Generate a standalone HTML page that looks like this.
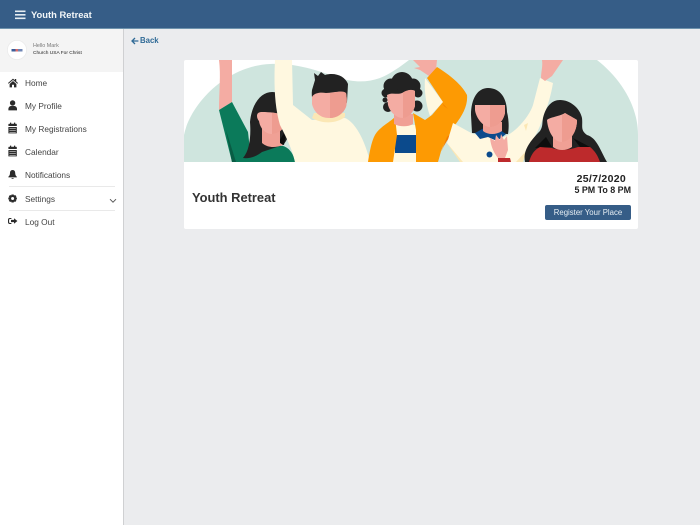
<!DOCTYPE html>
<html><head><meta charset="utf-8">
<style>
*{box-sizing:border-box}
html,body{margin:0;padding:0;width:700px;height:525px;overflow:hidden;background:#ebecee;font-family:"Liberation Sans",sans-serif}
.abs{position:absolute;white-space:nowrap}
#hdr{left:0;top:0;width:700px;height:29px;background:#365d87;border-bottom:1px solid #6f93ad}
#side{left:0;top:29px;width:124px;height:496px;background:#fff;border-right:1px solid #cfd0d2}
#prof{left:0;top:29px;width:123px;height:43px;background:#f4f4f4}
.it{left:25px;font-size:8.3px;color:#444;line-height:12px}
.hr{left:9px;width:106px;height:1px;background:#e9e9e9}
#card{left:184px;top:60px;width:454px;height:169px;background:#fff;border-radius:2px}
</style></head><body>
<div class="abs" id="hdr"></div>
<svg class="abs" style="left:15px;top:10px" width="11" height="10"><g fill="#e6edf2"><rect x="0" y="0.5" width="10.5" height="1.6"/><rect x="0" y="4" width="10.5" height="1.6"/><rect x="0" y="7.5" width="10.5" height="1.6"/></g></svg>
<div class="abs" style="left:31px;top:8px;font-size:9.4px;font-weight:bold;color:#f2f6f8;line-height:13px;width:70px">Youth Retreat</div>

<div class="abs" id="side"></div>
<div class="abs" id="prof"></div>
<svg class="abs" style="left:7px;top:40px" width="20" height="20"><circle cx="10" cy="10" r="9.6" fill="#fff" stroke="#ebebeb" stroke-width=".8"/><rect x="4.5" y="9" width="4" height="2.5" fill="#3c5f9a"/><rect x="8.5" y="9" width="2.5" height="2.5" fill="#d86a6a"/><rect x="11" y="9" width="4.5" height="2.5" fill="#6f86b5"/></svg>
<div class="abs" style="left:33px;top:42.5px;font-size:5.4px;color:#777;line-height:7px">Hello Mark</div>
<div class="abs" style="left:33px;top:49.5px;font-size:4.8px;color:#222;line-height:7px">Church USA For Christ</div>

<svg class="abs" style="left:8px;top:77px" width="10" height="160" viewBox="0 0 10 160" fill="#2b2b2b">
<path d="M0 6 L5 1.6 L6.8 3.2 V2 H8.2 V4.4 L10 6 L9.4 6.8 L5 3 L.6 6.8Z M1.6 7 L5 4 L8.4 7 V10.4 H6 V7.8 H4 V10.4 H1.6Z"/>
<circle cx="4.6" cy="26" r="2.7"/><path d="M.4 33.400 V32 C.4 30 2 29 3 29 H6.2 C7.4 29 9 30 9 32 V33.400Z"/>
<path d="M.4 50 H8.8 V56.400 H.4Z M.4 49 V47.4 C.4 47 .8 46.7 1.2 46.7 H2 V45.6 H3.2 V46.7 H6 V45.6 H7.2 V46.7 H8 C8.4 46.7 8.8 47 8.8 47.4 V49Z"/>
<g fill="#fff"><rect x="1.4" y="51" width="6.4" height=".5"/><rect x="1.4" y="53" width="6.4" height=".5"/><rect x="1.4" y="55" width="6.4" height=".5"/></g>
<path d="M.4 73 H8.8 V79.400 H.4Z M.4 72 V70.4 C.4 70 .8 69.7 1.2 69.7 H2 V68.6 H3.2 V69.7 H6 V68.6 H7.2 V69.7 H8 C8.4 69.7 8.8 70 8.8 70.4 V72Z"/>
<g fill="#fff"><rect x="1.4" y="74" width="6.4" height=".5"/><rect x="1.4" y="76" width="6.4" height=".5"/><rect x="1.4" y="78" width="6.4" height=".5"/></g>
<path d="M4.6 93 C6.6 93 7.2 94.6 7.2 96 C7.2 98 8 99 8.8 99.6 V100.400 H.4 V99.6 C1.2 99 2 98 2 96 C2 94.6 2.6 93 4.6 93Z M3.4 101 H5.8 C5.8 102 3.4 102 3.4 101Z"/>
<path fill-rule="evenodd" d="M3.5 117.500 H5.700 L6 118.500 L7.100 118 L8.400 119.300 L7.800 120.300 L8.900 120.600 V122.400 L7.800 122.700 L8.400 123.700 L7.100 125 L6 124.500 L5.700 125.500 H3.500 L3.200 124.500 L2.100 125 L.8 123.700 L1.400 122.700 L.3 122.400 V120.600 L1.400 120.300 L.8 119.300 L2.100 118 L3.200 118.500Z M4.600 120 A1.500 1.500 0 1 0 4.600 123 A1.500 1.500 0 1 0 4.600 120Z"/>
<path d="M3.400 142 H2 C1.400 142 1.100 142.400 1.100 143 V145 C1.100 145.600 1.400 146 2 146 H3.400 V147 H1.800 C.6 147 0 146.200 0 145.200 V142.800 C0 141.800 .6 141 1.800 141 H3.400Z M6 141.200 L9.400 144 L6 146.800 V145.100 H3 V142.900 H6Z"/>
</svg>
<div class="abs it" style="top:77px">Home</div>
<div class="abs it" style="top:100px">My Profile</div>
<div class="abs it" style="top:123px">My Registrations</div>
<div class="abs it" style="top:146px">Calendar</div>
<div class="abs it" style="top:169px">Notifications</div>
<div class="abs hr" style="top:186px"></div>
<div class="abs it" style="top:193px">Settings</div>
<svg class="abs" style="left:109px;top:198px" width="8" height="6"><path d="M1 1.200 L4 4.200 L7 1.200" fill="none" stroke="#555" stroke-width="1"/></svg>
<div class="abs hr" style="top:210px"></div>
<div class="abs it" style="top:216px">Log Out</div>

<svg class="abs" style="left:131px;top:37px" width="8" height="8"><path d="M7.400 4 H1.400 M4 1 L1 4 L4 7" fill="none" stroke="#2f6a96" stroke-width="1.300"/></svg>
<div class="abs" style="left:140px;top:35px;font-size:7.800px;font-weight:bold;color:#2f6a96;line-height:12px">Back</div>

<div class="abs" id="card"></div>
<svg class="abs" style="left:0;top:0" width="700" height="163" viewBox="0 0 700 163">
<defs><clipPath id="c"><rect x="184" y="60" width="454" height="102"/></clipPath></defs>
<g clip-path="url(#c)">
<path fill="#cfe5de" d="M184 162 V135 C190 105 225 66 270 64 C300 63 320 72 340 78 C352 82 366 83 380 78 C390 74 400 67 409 60 H597 C620 78 638 105 638 135 V162Z"/>
<!-- person 1 -->
<path fill="#f4aca3" d="M219 60 H232 L232 102 L219 110 C219 92 221 75 219 60Z"/>
<path fill="#0b7a5a" d="M219 110 L232 102 L248 132 L250 150 L265 146 L283 146 C290 148 294 155 295 162 H232Z"/>
<path fill="#095c44" d="M226 130 L236 162 H232Z"/>
<path fill="#222" d="M243 158 C250 150 251 135 250 122 C252 102 262 92 272 92 C284 92 290 104 290 122 C290 132 288 140 283 145 L262 152 C256 157 248 159 243 158Z"/>
<path fill="#0d0d0d" d="M278 143 L287 128 L284 145Z"/>
<path fill="#f0a095" d="M262 128 H280 V143 L283 145 C275 148 268 148 262 143Z"/>
<path fill="#f4aca3" d="M257 116 C257 113 259 112 262 112 C270 112 278 113 283 115 C286 116 287 118 287 120 C285 128 279 134 272 134 C265 134 260 128 259 121 C258 120 257 118 257 116Z"/>
<path fill="#ee9c90" d="M272 112.500 C276 113 280 114 283 115 C286 116 287 118 287 120 C285 128 279 134 272 134Z"/>
<!-- person 2 -->
<path fill="#fff8e0" d="M275 60 H292 L293 105 L312 120 L345 118 C355 122 365 140 370 162 H295 C292 148 285 135 280 125 C274 105 274 80 275 60Z"/>
<path fill="#fbe7b5" d="M312 118 C322 124 336 124 345 117 L345 113 H314Z"/>
<path fill="#222" d="M312 90 L315 80 L314 73 L318 76 L321 72 L325 75 C335 72 345 76 348 84 L347 102 L343 112 L318 114 C313 105 311 97 312 90Z"/>
<path fill="#f4aca3" d="M312 97 C314 93 320 92 326 93 C333 93 342 90 346 93 C347 98 347 103 346 107 C343 114 337 118 329 118 C320 118 314 112 312 104Z"/>
<path fill="#ee9c90" d="M330 93 C335 93 342 90 346 93 C347 98 347 103 346 107 C343 114 337 118 330 118Z"/>
<!-- person 3 -->
<path fill="#fff8e0" d="M425 78 L443 102 L430 116 C426 105 424 90 425 78Z"/>
<path fill="#f4aca3" d="M413 60 H437 L436 70 L429 76 L420 70 L414 68 L420 67Z"/>
<path fill="#fff8e0" d="M393 125 H416 V162 H393Z"/>
<path fill="#0b4a8c" d="M395 135 H416 V153 H395Z"/>
<path fill="#fd9a03" d="M368 162 C370 150 372 138 377 132 C383 125 390 122 395 117 L397 135 L393 162Z"/>
<path fill="#fd9a03" d="M413 113 L425 120 L432 115 L443 102 L427 78 L437 67 C450 75 462 85 467 95 C468 105 463 115 455 125 C450 135 442 145 440 155 L438 162 H416 L416 130Z"/>
<path fill="#f27a02" d="M441 152 C444 145 448 139 453 132 L447 137 Z M442 103 L448 109 L444 106Z"/>
<g fill="#222"><circle cx="402" cy="83" r="11"/><circle cx="391" cy="86" r="7.500"/><circle cx="413" cy="86" r="7.500"/><circle cx="386" cy="93" r="4.500"/><circle cx="418" cy="93" r="4.500"/><circle cx="388" cy="107" r="5"/><circle cx="417" cy="106" r="5.500"/><circle cx="385" cy="100" r="2.500"/><rect x="388" y="90" width="27" height="18"/></g>
<path fill="#f0a095" d="M394 114 H413 V124 C408 127 400 127 394 124Z"/>
<path fill="#f4aca3" d="M387 95 C392 92 397 95 402 93 C407 90 412 89 415 91 V106 C413 113 408 118 403 118 C396 118 390 112 388 105Z"/>
<path fill="#ee9c90" d="M403 92.500 C407 90 412 89 415 91 V106 C413 113 408 118 403 118Z"/>
<!-- person 4 -->
<path fill="#fbe7b5" d="M447 143 L452 145 L464 162 H460Z"/>
<path fill="#fff8e0" d="M540 78 L553 83 C551 95 548 105 545 112 C540 130 530 145 525 152 L523 162 H463 L447 143 L453 123 L473 134 L500 138 C515 135 530 115 533 105Z"/>
<path fill="#fbe7b5" d="M528 123 L526 131 L524 125Z M527 150 L523 162 H516Z"/>
<path fill="#f4aca3" d="M542 60 H563 L552 76 L545 81 L541 78 C541 72 543 66 542 60Z"/>
<path fill="#222" d="M471 115 C471 98 478 88 488 88 C500 88 507 98 507 112 C509 120 509 128 508 134 L472 133Z"/>
<path fill="#0b4a8c" d="M475 133 L484 128 L500 130 L506 134 L497 141 L488 137 L480 139Z"/>
<path fill="#f0a095" d="M483 122 H502 V131 C496 135 488 135 483 131Z"/>
<path fill="#f4aca3" d="M475 105 L505 105 V113 C503 122 497 127 490 127 C483 127 476 118 475 110Z"/>
<path fill="#ee9c90" d="M490 105 H505 V113 C503 122 497 127 490 127Z"/>
<rect x="484" y="100" width="1.500" height="5" fill="#222"/><rect x="496" y="100" width="1.500" height="5" fill="#222"/>
<circle cx="489.500" cy="154.500" r="3" fill="#0b4a8c"/>
<path fill="#bd2a2c" d="M498 158 H510 L511 162 H498Z"/>
<path fill="#f4aca3" d="M490 138 L495 141 L496 135 L500 140 L501 134 L504 140 L507 136 L508 150 L505 158 L498 158 C494 153 491 147 490 138Z"/>
<!-- person 5 -->
<path fill="#222" d="M525 162 C523 152 528 143 540 131 C543 126 542 124 543 118 C546 106 552 100 560 100 C570 100 580 108 582 118 C583 126 580 130 587 135 C597 138 600 150 607 162Z"/>
<path fill="#0d0d0d" d="M535 148 L546 137 L552 147 Z M573 138 L590 147 L580 147Z"/>
<path fill="#bd2a2c" d="M529 162 C531 155 534 150 540 147 L552 148 C560 151 570 150 578 147 L590 147 C595 151 598 156 600 162Z"/>
<path fill="#f0a095" d="M553 135 H572 V147 C566 151 558 151 553 147Z"/>
<path fill="#f4aca3" d="M547 120 C550 117 558 117 565 113 C570 116 574 118 577 120 C577 132 570 142 562 142 C554 142 548 132 547 120Z"/>
<path fill="#ee9c90" d="M562 115 C563 115 564 114 565 113 C570 116 574 118 577 120 C577 132 570 142 562 142Z"/>
</g>
</svg>

<div class="abs" style="left:192px;top:189px;font-size:12.900px;font-weight:bold;color:#333;line-height:18px">Youth Retreat</div>
<div class="abs" style="left:526px;width:100px;top:173px;text-align:right;font-size:10.500px;font-weight:bold;color:#222;line-height:13px;letter-spacing:.3px">25/7/2020</div>
<div class="abs" style="left:531px;width:100px;top:184px;text-align:right;font-size:8.900px;font-weight:bold;color:#222;line-height:12px">5 PM To 8 PM</div>
<div class="abs" style="left:545px;top:205px;width:86px;height:15px;background:#365d87;border-radius:2px;color:#e8eff4;font-size:7.800px;line-height:15px;text-align:center">Register Your Place</div>
</body></html>
